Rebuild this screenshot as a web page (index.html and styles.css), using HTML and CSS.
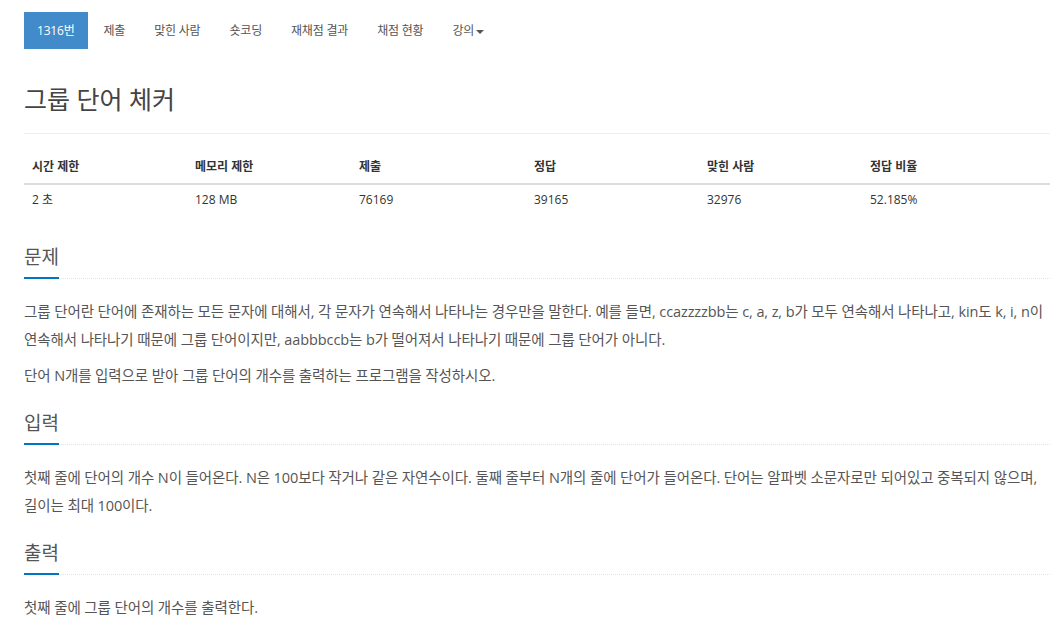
FILE: index.html
```html
<!DOCTYPE html>
<html lang="ko">
<head>
    <meta charset="UTF-8">
    <meta name="viewport" content="width=device-width, initial-scale=1.0">
    <title>1316번: 그룹 단어 체커</title>
    <link rel="stylesheet" href="styles.css">
</head>
<body>
    <div class="container">
        <ul class="problem-menu">
            <li class="active"><a href="#">1316번</a></li>
            <li><a href="#">제출</a></li>
            <li><a href="#">맞힌 사람</a></li>
            <li><a href="#">숏코딩</a></li>
            <li><a href="#">재채점 결과</a></li>
            <li><a href="#">채점 현황</a></li>
            <li><a href="#" class="dropdown-toggle">강의<span class="caret"></span></a></li>
        </ul>

        <div class="page-header">
            <h1 id="problem_title">그룹 단어 체커</h1>
        </div>

        <table class="problem-info">
            <thead>
                <tr>
                    <th>시간 제한</th>
                    <th>메모리 제한</th>
                    <th>제출</th>
                    <th>정답</th>
                    <th>맞힌 사람</th>
                    <th>정답 비율</th>
                </tr>
            </thead>
            <tbody>
                <tr>
                    <td>2 초</td>
                    <td>128 MB</td>
                    <td>76169</td>
                    <td>39165</td>
                    <td>32976</td>
                    <td>52.185%</td>
                </tr>
            </tbody>
        </table>

        <section class="problem-section first">
            <div class="headline">
                <h2>문제</h2>
            </div>
            <div class="problem-text">
                <p>그룹 단어란 단어에 존재하는 모든 문자에 대해서, 각 문자가 연속해서 나타나는 경우만을 말한다. 예를 들면, ccazzzzbb는 c, a, z, b가 모두 연속해서 나타나고, kin도 k, i, n이 연속해서 나타나기 때문에 그룹 단어이지만, aabbbccb는 b가 떨어져서 나타나기 때문에 그룹 단어가 아니다.</p>
                <p>단어 N개를 입력으로 받아 그룹 단어의 개수를 출력하는 프로그램을 작성하시오.</p>
            </div>
        </section>

        <section class="problem-section">
            <div class="headline">
                <h2>입력</h2>
            </div>
            <div class="problem-text">
                <p>첫째 줄에 단어의 개수 N이 들어온다. N은 100보다 작거나 같은 자연수이다. 둘째 줄부터 N개의 줄에 단어가 들어온다. 단어는 알파벳 소문자로만 되어있고 중복되지 않으며, 길이는 최대 100이다.</p>
            </div>
        </section>

        <section class="problem-section">
            <div class="headline">
                <h2>출력</h2>
            </div>
            <div class="problem-text">
                <p>첫째 줄에 그룹 단어의 개수를 출력한다.</p>
            </div>
        </section>
    </div>
</body>
</html>
```

FILE: styles.css
```css
/* General Styles */
* {
    margin: 0;
    padding: 0;
    box-sizing: border-box;
}

body {
    font-family: "Open Sans", "Noto Sans CJK KR", sans-serif;
    color: #555;
    background-color: #fff;
    word-break: keep-all;
}

.container {
    width: 1050px;
    padding-left: 24px;
}

/* Problem menu */
.problem-menu {
    display: flex;
    list-style: none;
    margin-top: 12px;
}

.problem-menu li {
    margin-right: 3px;
}

.problem-menu a {
    display: block;
    height: 37px;
    line-height: 37px;
    padding: 0 13px;
    font-size: 12px;
    letter-spacing: -0.2px;
    color: #555;
    text-decoration: none;
}

.problem-menu li.active a {
    background-color: #428bca;
    color: #fff;
}

.caret {
    display: inline-block;
    width: 0;
    height: 0;
    margin-left: 2px;
    vertical-align: middle;
    border-top: 4px solid #555;
    border-left: 4px solid transparent;
    border-right: 4px solid transparent;
}

/* Title */
.page-header {
    margin-top: 35px;
    padding-bottom: 19px;
    border-bottom: 1px solid #eee;
}

.page-header h1 {
    font-size: 25px;
    font-weight: normal;
    line-height: 30px;
    color: #444;
}

/* Info table */
.problem-info {
    width: 100%;
    margin-top: 15px;
    border-collapse: collapse;
    table-layout: fixed;
    font-size: 12px;
    color: #333;
}

.problem-info th {
    text-align: left;
    font-weight: bold;
    line-height: 20px;
    padding: 8px 8px 6px;
    border-bottom: 2px solid #ddd;
}

.problem-info td {
    line-height: 18px;
    padding: 6px 8px;
}

.problem-info th:nth-child(1) { width: 163px; }
.problem-info th:nth-child(2) { width: 164px; }
.problem-info th:nth-child(3) { width: 175px; }
.problem-info th:nth-child(4) { width: 173px; }
.problem-info th:nth-child(5) { width: 163px; }

/* Sections */
.problem-section {
    margin-top: 21px;
}

.problem-section.first {
    margin-top: 30px;
}

.headline {
    border-bottom: 1px dotted #dfe4ea;
    margin-bottom: 19px;
}

.headline h2 {
    display: inline-block;
    font-size: 19px;
    font-weight: normal;
    line-height: 24px;
    color: #555;
    padding-bottom: 8px;
    margin-bottom: -1px;
    border-bottom: 2px solid #0076c0;
}

.problem-text p {
    font-size: 14.5px;
    line-height: 28px;
    letter-spacing: -0.1px;
    margin-bottom: 8px;
}
```
